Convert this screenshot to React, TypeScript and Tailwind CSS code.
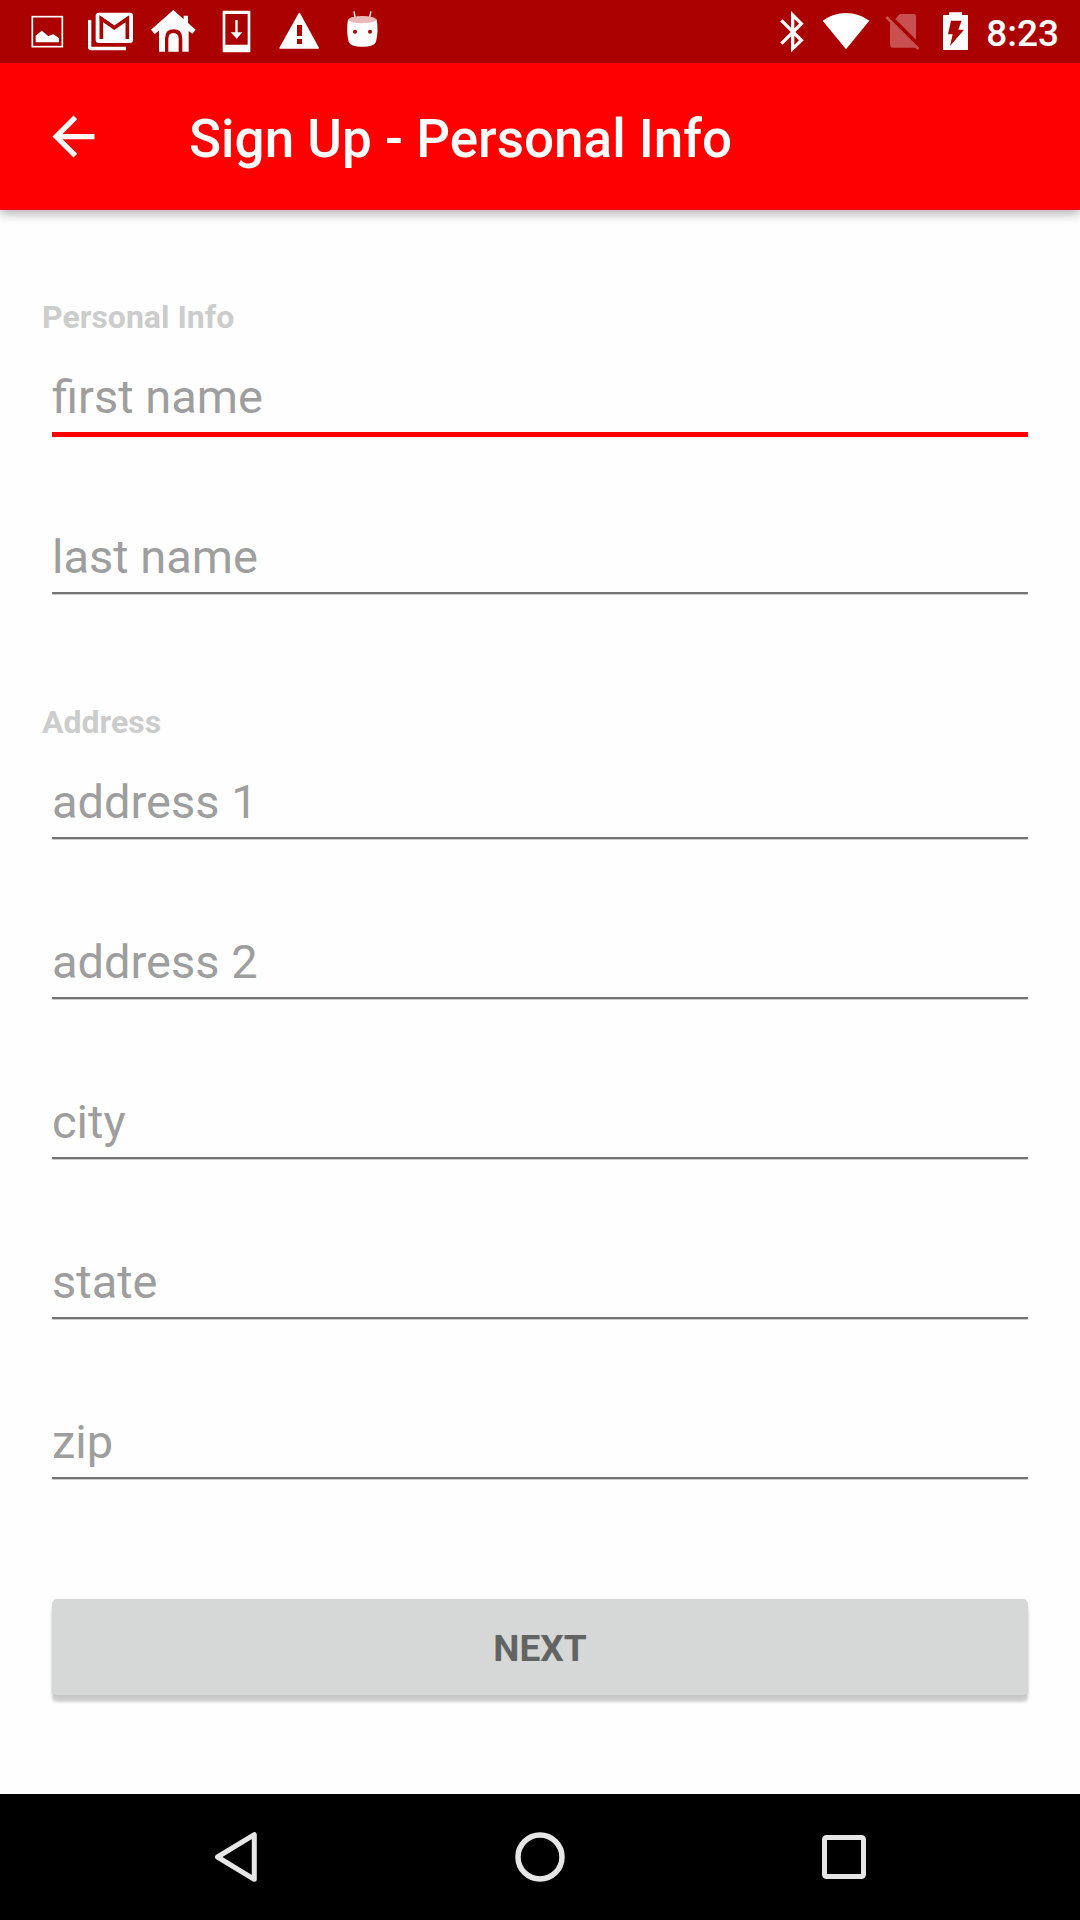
import type { ReactNode } from "react";

function StatusIcon({ label, children, x }: { label: string; children: ReactNode; x: number }) {
  return (
    <svg role="img" aria-label={label} className="h-[63px] w-[63px]" viewBox={`${x} 0 189 189`} fill="#fff">
      {children}
    </svg>
  );
}

function StatusBar() {
  return (
    <div className="relative z-10 flex h-[63px] items-center justify-between bg-[#ab0000] pr-[21px] pl-4 text-white">
      <div className="flex">
        <StatusIcon label="Screenshot" x={48}>
          <rect x="97" y="50" width="90" height="90" fill="none" stroke="#fff" strokeWidth="5" />
          <path d="M107 127V107L125 92L145 108L160 103L177 114V127Z" />
        </StatusIcon>
        <StatusIcon label="Mail" x={237}>
          <path d="M264 60H274V140H378V151H274Q264 151 264 141Z" />
          <rect x="287" y="38" width="112" height="91" rx="9" />
          <path d="M304 117V56L343 83L382 56V117" fill="none" stroke="#ab0000" strokeWidth="11" />
          <path d="M299 47L343 77L387 47V58L343 88L299 58Z" fill="#ab0000" />
        </StatusIcon>
        <StatusIcon label="Home" x={426}>
          <path d="M520 30L551 58V47H564V69L587 89L577 101L566 93V155H547V116Q547 88 521 88Q495 88 495 116V155H477V92L464 102L453 89Z" />
          <path d="M505 155V118Q505 99 520 99Q536 99 536 118V155Z" />
        </StatusIcon>
        <StatusIcon label="Download" x={615}>
          <path fillRule="evenodd" d="M668 32H751V157H668ZM676 42V134H743V42Z" />
          <path d="M706 60H713V97H727L710 116L692 97H706Z" />
        </StatusIcon>
        <StatusIcon label="Warning" x={804}>
          <path d="M898 40L955 144H840Z" stroke="#fff" strokeWidth="4" strokeLinejoin="round" />
          <path d="M891 75H906V108H891ZM891 117H906V132H891Z" fill="#ab0000" />
        </StatusIcon>
        <StatusIcon label="Android" x={993}>
          <path d="M1062 34L1066 55M1113 34L1108 55" stroke="#fff" strokeWidth="4" />
          <path d="M1044 58Q1087 78 1130 58Q1136 95 1128 125Q1123 140 1087 140Q1051 140 1046 125Q1038 95 1044 58Z" />
          <ellipse cx="1087" cy="59" rx="41" ry="11" fill="#e9b9b9" />
          <circle cx="1065" cy="95" r="6" fill="#ab0000" />
          <circle cx="1110" cy="95" r="6" fill="#ab0000" />
        </StatusIcon>
      </div>
      <div className="flex items-center">
        <svg role="img" aria-label="Bluetooth" className="h-[63px] w-9" viewBox="48 0 108 189">
          <path d="M64 61L124 121L98 146V45L124 71L64 131" fill="none" stroke="#fff" strokeWidth="10" />
        </svg>
        <svg role="img" aria-label="Wi-Fi" className="h-[63px] w-[68px]" viewBox="156 0 204 189">
          <path d="M188 62Q219 39 258 39Q297 39 328 62L258 148Z" fill="#fff" />
        </svg>
        <svg role="img" aria-label="No SIM card" className="h-[63px] w-[50px]" viewBox="360 0 150 189">
          <path d="M419 42H462Q468 42 468 49V119L406 57ZM382 48L478 144L473 150L466 143H399Q390 143 390 134V68L376 54Z" fill="#c85050" />
        </svg>
        <svg role="img" aria-label="Battery charging" className="h-[63px] w-12" viewBox="510 0 144 189">
          <path d="M567 37H606V45H624V150H549V45H567Z" fill="#fff" />
          <path d="M573 62H605L595 89H612L570 138L578 103H564Z" fill="#ab0000" />
        </svg>
        <time className="ml-2 pt-1 text-[37px] leading-[59px] font-medium">8:23</time>
      </div>
    </div>
  );
}

function Field({ id, active = false }: { id: string; active?: boolean }) {
  return (
    <input
      type="text"
      aria-label={id}
      name={id}
      placeholder={id}
      className={
        "mx-2.5 h-[72px] border-b-2 bg-transparent pb-0.5 text-[47px] leading-[56px] text-[#424242] outline-none placeholder:text-[#9e9e9e] placeholder:opacity-100 " +
        (active ? "border-[#ff0000] shadow-[0_3px_0_0_#ff0000]" : "border-[#757575] shadow-[0_1px_0_0_#cccccc]")
      }
    />
  );
}

function Section({ title, fields, active }: { title: string; fields: string[]; active?: string }) {
  return (
    <section className="flex flex-col">
      <h2 className="mb-[25px] text-[32px] leading-10 font-bold text-[#cccccc]">{title}</h2>
      <div className="flex flex-col gap-[88px]">
        {fields.map((f) => (
          <Field key={f} id={f} active={f === active} />
        ))}
      </div>
    </section>
  );
}

export default function App() {
  return (
    <div className="flex min-h-screen flex-col bg-[#fefefe] font-['Roboto',sans-serif]">
      <StatusBar />
      <header className="flex h-[147px] items-center bg-[#ff0000] pl-[42px] text-white shadow-[0_4px_10px_rgba(0,0,0,0.3)]">
        <button type="button" aria-label="Back">
          <svg className="size-[63px]" viewBox="0 0 24 24" fill="currentColor">
            <path d="M20 11H7.83l5.59-5.59L12 4l-8 8 8 8 1.41-1.41L7.83 13H20v-2z" />
          </svg>
        </button>
        <h1 className="ml-[84px] pt-1 text-[53px] leading-16 font-medium">Sign Up - Personal Info</h1>
      </header>
      <form className="flex flex-1 flex-col px-[42px] pt-[87px] pb-24" onSubmit={(e) => e.preventDefault()}>
        <div className="flex flex-col gap-[108px]">
          <Section title="Personal Info" fields={["first name", "last name"]} active="first name" />
          <Section title="Address" fields={["address 1", "address 2", "city", "state", "zip"]} />
        </div>
        <button
          type="submit"
          className="mx-2.5 mt-[120px] h-24 rounded-[5px] bg-[#d6d8d7] pt-1 text-[37px] font-bold text-[#626463] shadow-[0_7px_3px_rgba(0,0,0,0.19),0_1px_4px_rgba(0,0,0,0.08)]"
        >
          NEXT
        </button>
      </form>
      <nav className="flex h-[126px] bg-black px-[84px]">
        <button type="button" aria-label="Back" className="flex flex-1 items-center justify-center">
          <svg className="size-[60px]" viewBox="0 0 60 60" fill="none" stroke="#e6e6e6" strokeWidth="5" strokeLinejoin="round">
            <path d="M11.5 30L48.3 7.7V52.3Z" />
          </svg>
        </button>
        <button type="button" aria-label="Home" className="flex flex-1 items-center justify-center">
          <svg className="size-[60px]" viewBox="0 0 60 60" fill="none" stroke="#e6e6e6" strokeWidth="5.5">
            <circle cx="30" cy="30" r="22" />
          </svg>
        </button>
        <button type="button" aria-label="Recent apps" className="flex flex-1 items-center justify-center">
          <svg className="size-[60px]" viewBox="0 0 60 60" fill="none" stroke="#e6e6e6" strokeWidth="5">
            <rect x="10.5" y="10.5" width="39" height="39" rx="2" />
          </svg>
        </button>
      </nav>
    </div>
  );
}
